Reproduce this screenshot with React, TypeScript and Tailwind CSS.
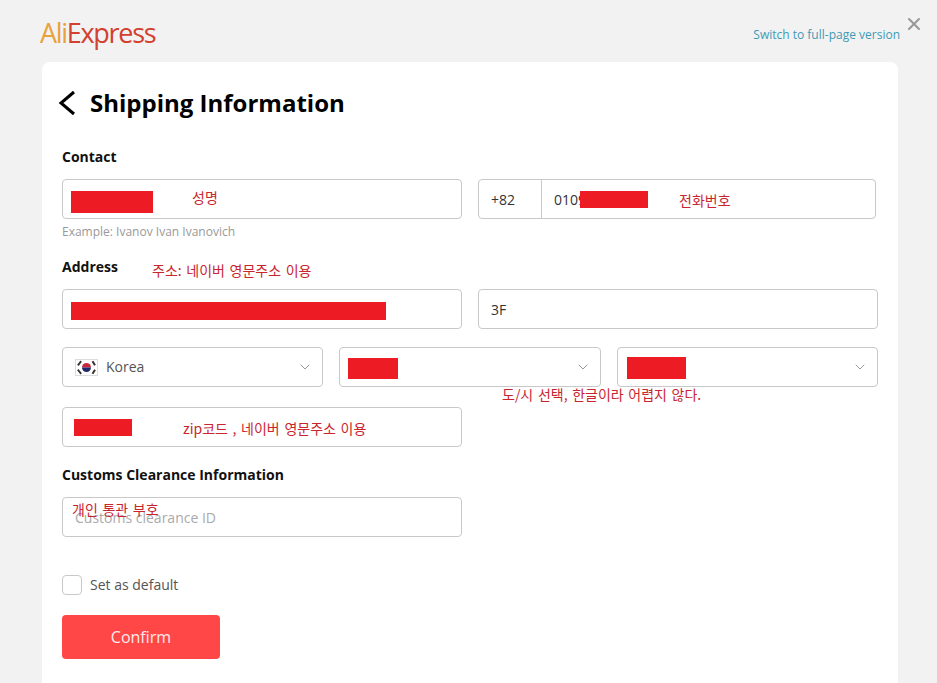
import { ChevronDown, X } from 'lucide-react'

const boxClass = 'h-10 shrink-0 rounded border border-[#c8c8c8] bg-white text-[14px] text-[#333]'

function Redaction({ className }: { className: string }) {
  return <div className={`absolute bg-[#ed1c24] ${className}`} />
}

function Note({ className, children }: { className: string; children: string }) {
  return (
    <span
      className={`absolute whitespace-nowrap text-[14px] leading-4 text-[#c9252f] [word-spacing:1.5px] ${className}`}
      style={{ fontFamily: '"Noto Sans CJK KR", sans-serif' }}
    >
      {children}
    </span>
  )
}

function KoreaFlag() {
  return (
    <svg width="23" height="17" viewBox="0 0 23 17" className="shrink-0">
      <rect x="0.5" y="0.5" width="22" height="16" fill="#fff" stroke="#dcdcdc" />
      <path d="M7 8.5a4.5 4.5 0 0 1 9 0z" fill="#c8283c" />
      <path d="M7 8.5a4.5 4.5 0 0 0 9 0z" fill="#1f2a6b" />
      <g stroke="#333" strokeWidth="2" strokeLinecap="square">
        <path d="M3.5 5.5l2-2.5M18 3l1.5 2.5M3.5 11.5l2 2.5M18 14l1.5-2.5" />
      </g>
    </svg>
  )
}

function SelectBox({ width, children }: { width: string; children?: React.ReactNode }) {
  return (
    <div className={`${boxClass} ${width} flex items-center justify-between pl-3 pr-[9px]`}>
      <div className="flex items-center gap-2">{children}</div>
      <ChevronDown size={16} strokeWidth={1.5} className="text-[#999]" />
    </div>
  )
}

export default function App() {
  return (
    <div
      className="relative h-[683px] overflow-hidden bg-[#f2f2f2]"
      style={{ fontFamily: '"Open Sans", sans-serif' }}
    >
      <header className="flex h-[62px] items-start justify-between pl-10 pr-[37px]">
        <div className="mt-[14px] text-[27px] leading-[38px] tracking-[-1.3px]">
          <span className="text-[#e9a13b]">Ali</span>
          <span className="text-[#d2402f]">Express</span>
        </div>
        <a className="mt-[27px] text-[12px] leading-4 text-[#3f9ab5]">Switch to full-page version</a>
      </header>
      <button className="absolute right-[13px] top-[14px] text-[#999]">
        <X size={20} strokeWidth={2.5} />
      </button>

      <main className="ml-[42px] h-[640px] w-[856px] rounded-t-lg bg-white px-5 pt-6">
        <div className="flex h-[34px] items-center">
          <svg width="18" height="26" viewBox="0 0 18 26" fill="none" className="-ml-1 shrink-0">
            <path d="M16 2 3 13l13 11" stroke="#000" strokeWidth="3" />
          </svg>
          <h1 className="ml-[14px] text-[24px] font-bold leading-[34px] text-black">
            Shipping Information
          </h1>
        </div>

        <h2 className="mt-[27px] text-[14px] font-bold leading-5 text-[#111]">Contact</h2>
        <div className="mt-3 flex gap-4">
          <div className={`${boxClass} w-[400px]`} />
          <div className={`${boxClass} flex w-[398px] items-center`}>
            <span className="flex h-full w-[63px] items-center border-r border-[#c8c8c8] pl-3">+82</span>
            <span className="pl-3">0109</span>
          </div>
        </div>
        <p className="mt-[5px] text-[12px] leading-4 text-[#999]">Example: Ivanov Ivan Ivanovich</p>

        <h2 className="mt-[17px] text-[14px] font-bold leading-5 text-[#111]">Address</h2>
        <div className="mt-3 flex gap-4">
          <div className={`${boxClass} w-[400px]`} />
          <div className={`${boxClass} flex w-[400px] items-center pl-3`}>3F</div>
        </div>
        <div className="mt-[18px] flex gap-4">
          <SelectBox width="w-[261px]">
            <KoreaFlag />
            <span className="-mt-px text-[#555]">Korea</span>
          </SelectBox>
          <SelectBox width="w-[262px]" />
          <SelectBox width="w-[261px]" />
        </div>
        <div className={`${boxClass} mt-5 w-[400px]`} />

        <h2 className="mt-[18px] text-[14px] font-bold leading-5 text-[#111]">
          Customs Clearance Information
        </h2>
        <div className={`${boxClass} mt-3 flex w-[400px] items-center pl-3 text-[#aaa]`}>
          Customs clearance ID
        </div>

        <label className="mt-[38px] flex items-center gap-2">
          <span className="h-5 w-5 rounded border border-[#c8c8c8]" />
          <span className="text-[14px] leading-5 text-[#555]">Set as default</span>
        </label>

        <button className="mt-5 h-11 w-[158px] rounded bg-[#ff4747] text-[16px] font-medium text-[#fdeaea]">
          Confirm
        </button>
      </main>

      {/* red marks and notes someone painted over the screenshot */}
      <Redaction className="left-[71px] top-[191px] h-[22px] w-[82px]" />
      <Redaction className="left-[580px] top-[191px] h-[17px] w-[68px]" />
      <Redaction className="left-[71px] top-[302px] h-[18px] w-[315px]" />
      <Redaction className="left-[348px] top-[358px] h-[21px] w-[50px]" />
      <Redaction className="left-[627px] top-[357px] h-[22px] w-[59px]" />
      <Redaction className="left-[74px] top-[419px] h-[17px] w-[58px]" />

      <Note className="left-[192px] top-[189px]">성명</Note>
      <Note className="left-[679px] top-[192px]">전화번호</Note>
      <Note className="left-[152px] top-[262px]">주소: 네이버 영문주소 이용</Note>
      <Note className="left-[502px] top-[386px]">도/시 선택, 한글이라 어렵지 않다.</Note>
      <Note className="left-[183px] top-[420px]">zip코드 , 네이버 영문주소 이용</Note>
      <Note className="left-[72px] top-[501px]">개인 통관 부호</Note>
    </div>
  )
}
